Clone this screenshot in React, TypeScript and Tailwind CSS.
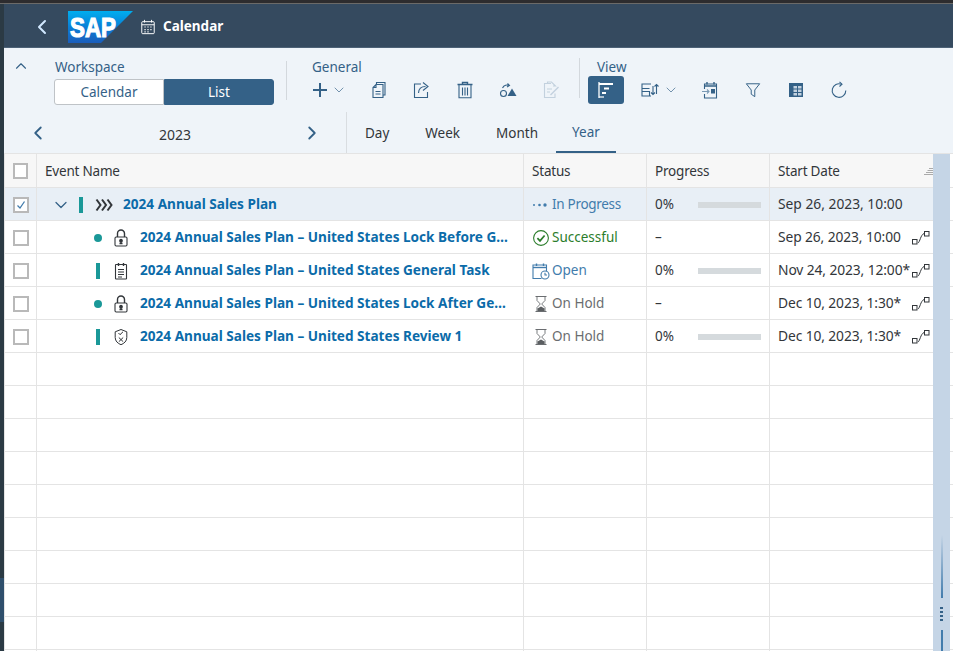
import React from 'react';
import { ChevronDown, ChevronLeft, ChevronRight, ChevronUp } from 'lucide-react';

const Ico: React.FC<{ s?: number; w?: number; c?: string; children: React.ReactNode }> = ({ s = 18, w = 1.1, c = '#346187', children }) => (
  <svg width={s} height={s} viewBox="0 0 18 18" fill="none" stroke={c} strokeWidth={w}>{children}</svg>
);

const SapLogo = () => (
  <svg width="65" height="32" viewBox="0 0 65 32">
    <defs>
      <linearGradient id="sapg" x1="0" y1="0" x2="0" y2="1">
        <stop offset="0" stopColor="#00aeef" />
        <stop offset="0.5" stopColor="#0a7fd6" />
        <stop offset="1" stopColor="#1b5dbb" />
      </linearGradient>
    </defs>
    <polygon points="0,0 65,0 33,32 0,32" fill="url(#sapg)" />
    <text x="2" y="26" fontFamily="'Liberation Sans', sans-serif" fontWeight="700" fontSize="28" fill="#fff" stroke="#fff" strokeWidth="1.2" textLength="46" lengthAdjust="spacingAndGlyphs">SAP</text>
  </svg>
);

const CalendarIcon = () => (
  <Ico c="#ffffff" s={16}>
    <rect x="2" y="3" width="14" height="13.5" rx="1" />
    <path d="M5 1v3M13 1v3M2 6.5h14" />
    <path strokeWidth="1.4" d="M5 9h1.4M8.3 9h1.4M11.6 9h1.4M5 12h1.4M8.3 12h1.4M11.6 12h1.4M5 14.6h1.4M8.3 14.6h1.4" />
  </Ico>
);

const IconBtn: React.FC<{ children: React.ReactNode }> = ({ children }) => (
  <button className="w-[43px] h-[26px] flex items-center justify-center">{children}</button>
);

const SectionLabel: React.FC<{ children: React.ReactNode }> = ({ children }) => (
  <div className="h-[18px] leading-[18px] text-[#346187]">{children}</div>
);

const TableHead: React.FC<{ children?: React.ReactNode; last?: boolean }> = ({ children, last }) => (
  <div className={`flex items-center px-2 pt-px tracking-[-0.2px] bg-[#f7f7f7] border-b border-[#e4e4e4] ${last ? '' : 'border-r'}`}>{children}</div>
);

const Checkbox: React.FC<{ checked?: boolean }> = ({ checked }) => (
  <div className="w-4 h-4 border-2 border-[#b9b9b9] bg-white flex items-center justify-center">
    {checked && (
      <svg width="10" height="10" viewBox="0 0 10 10" fill="none" stroke="#427cac" strokeWidth="1.3"><path d="M1.5 5.5 4 8l4.5-6.5" /></svg>
    )}
  </div>
);

const Lock = () => (
  <Ico c="#32363a">
    <rect x="3" y="8" width="12" height="9" rx="1.2" />
    <path strokeWidth="1.4" d="M5.5 8V4.5a3.5 3.5 0 0 1 7 0V8" />
    <circle cx="9" cy="11.7" r="1.3" fill="#32363a" />
    <path strokeWidth="1.4" d="M9 12v2.5M7.5 14.5h3" />
  </Ico>
);

const Note = () => (
  <Ico c="#32363a">
    <rect x="3.5" y="2.5" width="11" height="14.5" rx="0.6" />
    <path strokeWidth="1.4" d="M6.5 1v3M11.5 1v3" />
    <path d="M6 7.5h6M6 10h6M6 12.5h6M6 15h4" />
  </Ico>
);

const Shield = () => (
  <Ico c="#32363a" w={1}>
    <path d="M9 1.500 14.800 3.800v5.700c0 3.600-2.600 6-5.800 7.200-3.200-1.200-5.800-3.600-5.800-7.200V3.800z" />
    <path d="m6.500 5 1.500 1.700L11 3.800M6.800 9.500l4.400 4.200M11.200 9.500l-4.400 4.200" />
  </Ico>
);

const Hourglass = () => (
  <Ico c="#6a6d70" w={0.9}>
    <path strokeWidth="1.2" d="M3.500 1.500h11M3.500 16.500h11" />
    <path d="M5 2v3.500L8.300 9 5 12.500V16M13 2v3.500L9.700 9l3.300 3.500V16" />
    <path fill="#5b5e61" stroke="none" d="M5.500 16v-2.500L9 11.500l3.500 2V16z" />
  </Ico>
);

const Success = () => (
  <Ico c="#2b7d2b">
    <circle cx="9" cy="9" r="7.4" />
    <path strokeWidth="1.7" d="m5.400 9.200 2.600 2.700 4.600-5.400" />
  </Ico>
);

const OpenCal = () => (
  <Ico c="#427cac">
    <path d="M9.500 16.500H1V3h13.500v6" />
    <path strokeWidth="1.4" d="M1 5.500h13.500" />
    <path strokeWidth="1.4" d="M4.500 1.500v2.500M11.500 1.500v2.500" />
    <circle cx="13" cy="13" r="4" />
    <path d="M13 10.800V13h2" />
  </Ico>
);

const Dots = () => (
  <svg width="16" height="6" viewBox="0 0 16 6" fill="#427cac">
    <circle cx="2" cy="3" r="1" />
    <circle cx="7.500" cy="3" r="1.300" />
    <circle cx="13" cy="3" r="1.700" />
  </svg>
);

const Chain = () => (
  <svg width="18" height="16" viewBox="0 0 18 16" fill="none" stroke="#32363a" strokeWidth="1" className="shrink-0">
    <rect x="0.500" y="9.500" width="4.500" height="4.500" />
    <rect x="12.500" y="1.500" width="4.500" height="4.500" />
    <path d="M6 13c2-1 2.500-8 6-9.500" />
  </svg>
);

type Task = { name: string; kind: 'dot' | 'bar'; icon: React.ReactNode; status: React.ReactNode; statusText: string; statusColor: string; progress: boolean; date: string };

const tasks: Task[] = [
  { name: '2024 Annual Sales Plan – United States Lock Before General Task', kind: 'dot', icon: <Lock />, status: <Success />, statusText: 'Successful', statusColor: 'text-[#2b7d2b]', progress: false, date: 'Sep 26, 2023, 10:00' },
  { name: '2024 Annual Sales Plan – United States General Task', kind: 'bar', icon: <Note />, status: <OpenCal />, statusText: 'Open', statusColor: 'text-[#427cac]', progress: true, date: 'Nov 24, 2023, 12:00*' },
  { name: '2024 Annual Sales Plan – United States Lock After General Task', kind: 'dot', icon: <Lock />, status: <Hourglass />, statusText: 'On Hold', statusColor: 'text-[#6a6d70]', progress: false, date: 'Dec 10, 2023, 1:30*' },
  { name: '2024 Annual Sales Plan – United States Review 1', kind: 'bar', icon: <Shield />, status: <Hourglass />, statusText: 'On Hold', statusColor: 'text-[#6a6d70]', progress: true, date: 'Dec 10, 2023, 1:30*' },
];

const ProgressCell: React.FC<{ show: boolean }> = ({ show }) =>
  show ? (
    <>
      <span className="w-[43px]">0%</span>
      <div className="w-[63px] h-[6px] bg-[#d5dadd]" />
    </>
  ) : (
    <span>–</span>
  );

const cell = 'flex items-center pt-px border-b border-r border-[#e4e4e4] min-w-0';

export default function App() {
  return (
    <div className="w-[953px] h-[651px] overflow-hidden flex flex-col bg-white text-[13.5px] text-[#32363a] font-['Noto_Sans','Open_Sans',sans-serif]">
      <div className="h-[4px] shrink-0 bg-[#2d2c2e] border-b border-[#6b6a68]" />
      <div className="flex-1 flex min-h-0">
        <div className="w-[4px] shrink-0 flex flex-col">
          <div className="flex-1 bg-[#2b3a44]" />
          <div className="h-[44px] bg-[#2f4f6c]" />
          <div className="h-[29px] bg-[#2b3a44]" />
        </div>
        <div className="flex-1 min-w-0 flex flex-col">
          {/* shell bar */}
          <header className="h-[44px] shrink-0 pt-[2px] bg-[#354a5f] flex items-center border-b border-[#4d6277]">
            <ChevronLeft size={24} strokeWidth={2} className="ml-[26px] text-[#d1e8ff]" />
            <div className="ml-[14px]"><SapLogo /></div>
            <div className="ml-[7px]"><CalendarIcon /></div>
            <span className="ml-[7px] font-bold text-white">Calendar</span>
          </header>

          {/* toolbar */}
          <div className="shrink-0 bg-[#eff4f9]">
            <div className="h-[64px] flex">
              <ChevronUp size={18} strokeWidth={1.5} className="ml-[8px] mt-[9px] text-[#346187]" />
              <div className="ml-[24px] pt-[10px]">
                <div className="pl-px"><SectionLabel>Workspace</SectionLabel></div>
                <div className="mt-[3px] w-[220px] h-[26px] flex">
                  <div className="flex-1 bg-white border border-[#bfc3c7] rounded-l-[3px] flex items-center justify-center text-[#346187]">Calendar</div>
                  <div className="flex-1 bg-[#346187] border border-[#346187] rounded-r-[3px] flex items-center justify-center text-white">List</div>
                </div>
              </div>
              <div className="ml-[12px] mt-[13px] w-px h-[39px] bg-[#d3d8dd]" />
              <div className="ml-[22px] pt-[10px]">
                <div className="pl-[3px]"><SectionLabel>General</SectionLabel></div>
                <div className="flex items-center h-[26px] mt-px">
                  <div className="w-[22px] flex justify-center">
                    <svg width="16" height="16" viewBox="0 0 16 16" stroke="#346187" strokeWidth="2"><path d="M8 1v14M1 8h14" /></svg>
                  </div>
                  <ChevronDown size={16} strokeWidth={1} className="text-[#346187]" />
                  <div className="ml-[10px] flex">
                    <IconBtn>
                      <Ico>
                        <path d="M6.500 3.200V1.500h8.500v12.500h-2" />
                        <path d="M6 3.500h7v13H3V6.500zM3 6.500h3v-3M5.500 10.500h5M5.500 13h5" />
                      </Ico>
                    </IconBtn>
                    <IconBtn>
                      <Ico>
                        <path d="M8 3H1.500v13.500h13V11" />
                        <path d="M5.500 12c.2-4 3-6.500 7-6.500M10 1.500l5 4-5 4" />
                      </Ico>
                    </IconBtn>
                    <IconBtn>
                      <Ico>
                        <path strokeWidth="1.400" d="M1.500 3.500h15M6.500 3V1.500h5V3" />
                        <path d="M3 4v12.800h12V4M6.500 6.500v8M9 6.500v8M11.500 6.500v8" />
                      </Ico>
                    </IconBtn>
                    <IconBtn>
                      <Ico>
                        <circle cx="4.500" cy="12.500" r="3" />
                        <path d="M3.500 7C5 4 8 3.500 10 4.500M8.500 2.500 10.500 4.500 8 6" />
                        <polygon points="13,7.500 17.500,15 8.500,15" fill="#346187" stroke="none" />
                      </Ico>
                    </IconBtn>
                    <IconBtn>
                      <Ico c="#c3d1de">
                        <path d="M9 2.500H2.500v14h10.500v-4" />
                        <path d="M5.500 2.500V1h4l4 4h-2.500M5 8h5M5 11h3" />
                        <path strokeWidth="1.400" d="m8.500 14 8-8" />
                      </Ico>
                    </IconBtn>
                  </div>
                </div>
              </div>
              <div className="ml-[7px] mt-[10px] w-px h-[40px] bg-[#d3d8dd]" />
              <div className="ml-[8px] pt-[10px]">
                <div className="pl-[9px]"><SectionLabel>View</SectionLabel></div>
                <div className="flex items-center h-[28px]">
                  <button className="w-[36px] h-[28px] rounded-[3px] bg-[#346187] flex items-center justify-center">
                    <svg width="18" height="18" viewBox="0 0 18 18" fill="none" stroke="#fff" strokeWidth="1.300">
                      <path d="M2 1v16" />
                      <path strokeWidth="1.800" d="M2 3h14M7 7.500h5M5 12h4" />
                      <path strokeWidth="1.200" d="M2 16h5" />
                    </svg>
                  </button>
                  <div className="ml-[16px] w-[20px] flex justify-center">
                    <Ico>
                      <path d="M10 3H1v4.500h7.500M1 3v12h9M1 10.500h7.500V15" />
                      <path d="M12 5v8.500M10 11.500l2 2 2-2M15.500 13V3.500M13.500 5.500l2-2 2 2" />
                    </Ico>
                  </div>
                  <ChevronDown size={16} strokeWidth={1} className="ml-[3px] text-[#346187]" />
                  <div className="ml-[9px] flex">
                    <IconBtn>
                      <Ico>
                        <path d="M3.500 8V3h12v14h-12v-4" />
                        <path strokeWidth="1.400" d="M3.500 5h12M6 1v2.500M13 1v2.500" />
                        <path stroke="#7a9ab5" d="M1 10.500h7M6 8.500l2 2-2 2" />
                        <rect x="10" y="8" width="4" height="4.500" fill="#346187" stroke="none" />
                      </Ico>
                    </IconBtn>
                    <IconBtn>
                      <Ico s={16}>
                        <path d="M1.500 2h15L11 9v7.500l-4-2.800V9z" />
                      </Ico>
                    </IconBtn>
                    <IconBtn>
                      <svg width="16" height="16" viewBox="0 0 16 16">
                        <rect x="1" y="1" width="14" height="14" fill="#346187" />
                        <g fill="#c3d2e0">
                          <rect x="5.500" y="4" width="3.500" height="2.500" />
                          <rect x="10" y="4" width="3.500" height="2.500" />
                          <rect x="5.500" y="7.500" width="3.500" height="2.500" />
                          <rect x="10" y="7.500" width="3.500" height="2.500" />
                          <rect x="5.500" y="11" width="3.500" height="2.500" />
                          <rect x="10" y="11" width="3.500" height="2.500" />
                        </g>
                      </svg>
                    </IconBtn>
                    <IconBtn>
                      <Ico>
                        <path d="M11.500 3.200a6.800 6.800 0 1 0 4.300 6.300" />
                        <path d="M9.500 0.800 12 3.200 9.500 5.500" />
                      </Ico>
                    </IconBtn>
                  </div>
                </div>
              </div>
            </div>
            <div className="h-[42px] flex border-b border-[#e4e4e4]">
              <div className="w-[343px] px-[23px] flex items-center justify-between border-r border-[#d9dde1]">
                <ChevronLeft size={22} strokeWidth={2} className="text-[#346187]" />
                <span className="pt-[4px] text-sm">2023</span>
                <ChevronRight size={22} strokeWidth={2} className="text-[#346187]" />
              </div>
              <nav className="flex">
                <div className="px-[18px] pt-[2px] flex items-center">Day</div>
                <div className="px-[18px] pt-[2px] flex items-center">Week</div>
                <div className="px-[18px] pt-[2px] flex items-center">Month</div>
                <div className="px-[16px] pt-[2px] flex items-center text-[#346187] border-b-2 border-[#346187]">Year</div>
              </nav>
            </div>
          </div>

          {/* table */}
          <div className="flex-1 min-h-0 flex overflow-hidden">
            <div className="w-[929px] shrink-0 border-l border-[#e4e4e4]">
              <div className="grid grid-cols-[32px_487px_123px_123px_163px] grid-rows-[34px] auto-rows-[33px]">
                <TableHead><Checkbox /></TableHead>
                <TableHead>Event Name</TableHead>
                <TableHead>Status</TableHead>
                <TableHead>Progress</TableHead>
                <TableHead last>
                  <span className="flex-1">Start Date</span>
                  <svg width="9" height="9" viewBox="0 0 9 9" className="-mr-[8px]" stroke="#aaaaaa" strokeWidth="1">
                    <path d="M5 1.500h4M3.500 3.500H9M2 5.500h7M0 7.500h9" />
                  </svg>
                </TableHead>

                {/* summary row */}
                <div className={`${cell} pl-[8px] bg-[#e8eff6]`}><Checkbox checked /></div>
                <div className={`${cell} bg-[#e8eff6] pl-[14px]`}>
                  <ChevronDown size={20} strokeWidth={1.500} className="text-[#346187]" />
                  <div className="ml-[8px] w-[4px] h-[16px] bg-[#1a9898]" />
                  <div className="ml-[12px]">
                    <Ico c="#32363a" w={2}>
                      <path d="m1.500 3.500 4 5.500-4 5.500M7 3.500l4 5.500-4 5.500M12.500 3.500l4 5.500-4 5.500" />
                    </Ico>
                  </div>
                  <span className="ml-[10px] text-[13.6px] font-bold text-[#0b6ba9]">2024 Annual Sales Plan</span>
                </div>
                <div className={`${cell} bg-[#e8eff6] pl-[8px] text-[#427cac]`}>
                  <div className="w-[20px]"><Dots /></div>
                  <span className="tracking-[-0.3px]">In Progress</span>
                </div>
                <div className={`${cell} bg-[#e8eff6] pl-[8px]`}><ProgressCell show /></div>
                <div className="flex items-center pt-px border-b border-[#e4e4e4] bg-[#e8eff6] pl-[8px] text-[13.8px]">Sep 26, 2023, 10:00</div>

                {tasks.map((t) => (
                  <React.Fragment key={t.name}>
                    <div className={`${cell} pl-[8px]`}><Checkbox /></div>
                    <div className={`${cell} pl-[57px] pr-[10px]`}>
                      <div className="w-[8px] shrink-0 flex justify-center">
                        {t.kind === 'dot' ? <div className="w-2 h-2 rounded-full bg-[#1a9898]" /> : <div className="w-[4px] h-[16px] bg-[#1a9898]" />}
                      </div>
                      <div className="ml-[10px] shrink-0">{t.icon}</div>
                      <span className="ml-[10px] text-[13.6px] font-bold text-[#0b6ba9] truncate">{t.name}</span>
                    </div>
                    <div className={`${cell} pl-[8px] ${t.statusColor}`}>
                      <div className="w-[20px] shrink-0">{t.status}</div>
                      <span>{t.statusText}</span>
                    </div>
                    <div className={`${cell} pl-[8px]`}><ProgressCell show={t.progress} /></div>
                    <div className="flex items-center pt-px border-b border-[#e4e4e4] pl-[8px] pr-[3px] justify-between text-[13.8px]">
                      <span className="whitespace-nowrap tracking-[-0.1px]">{t.date}</span>
                      <Chain />
                    </div>
                  </React.Fragment>
                ))}

                {Array.from({ length: 10 }).map((_, i) => (
                  <React.Fragment key={i}>
                    <div className={cell} />
                    <div className={cell} />
                    <div className={cell} />
                    <div className={cell} />
                    <div className="border-b border-[#e4e4e4]" />
                  </React.Fragment>
                ))}
              </div>
            </div>

            {/* scroll bar */}
            <div className="w-[17px] shrink-0 bg-[#c5d5e6] flex flex-col items-center">
              <div className="flex-1" />
              <div className="w-[2px] h-[63px] bg-gradient-to-b from-transparent to-[#427cac]" />
              <div className="mt-[9px] mb-[9px] flex flex-col gap-[2px]">
                <div className="w-[3px] h-[2px] bg-[#346187]" />
                <div className="w-[3px] h-[2px] bg-[#346187]" />
                <div className="w-[3px] h-[2px] bg-[#346187]" />
                <div className="w-[3px] h-[2px] bg-[#346187]" />
              </div>
              <div className="w-[2px] h-[21px] bg-[#427cac]" />
            </div>

            <div className="flex-1 min-w-0 flex flex-col">
              <div className="h-[34px] shrink-0 border-b border-[#e4e4e4]" />
              {Array.from({ length: 14 }).map((_, i) => (
                <div key={i} className="h-[33px] shrink-0 border-b border-[#e4e4e4]" />
              ))}
            </div>
          </div>
        </div>
      </div>
    </div>
  );
}
